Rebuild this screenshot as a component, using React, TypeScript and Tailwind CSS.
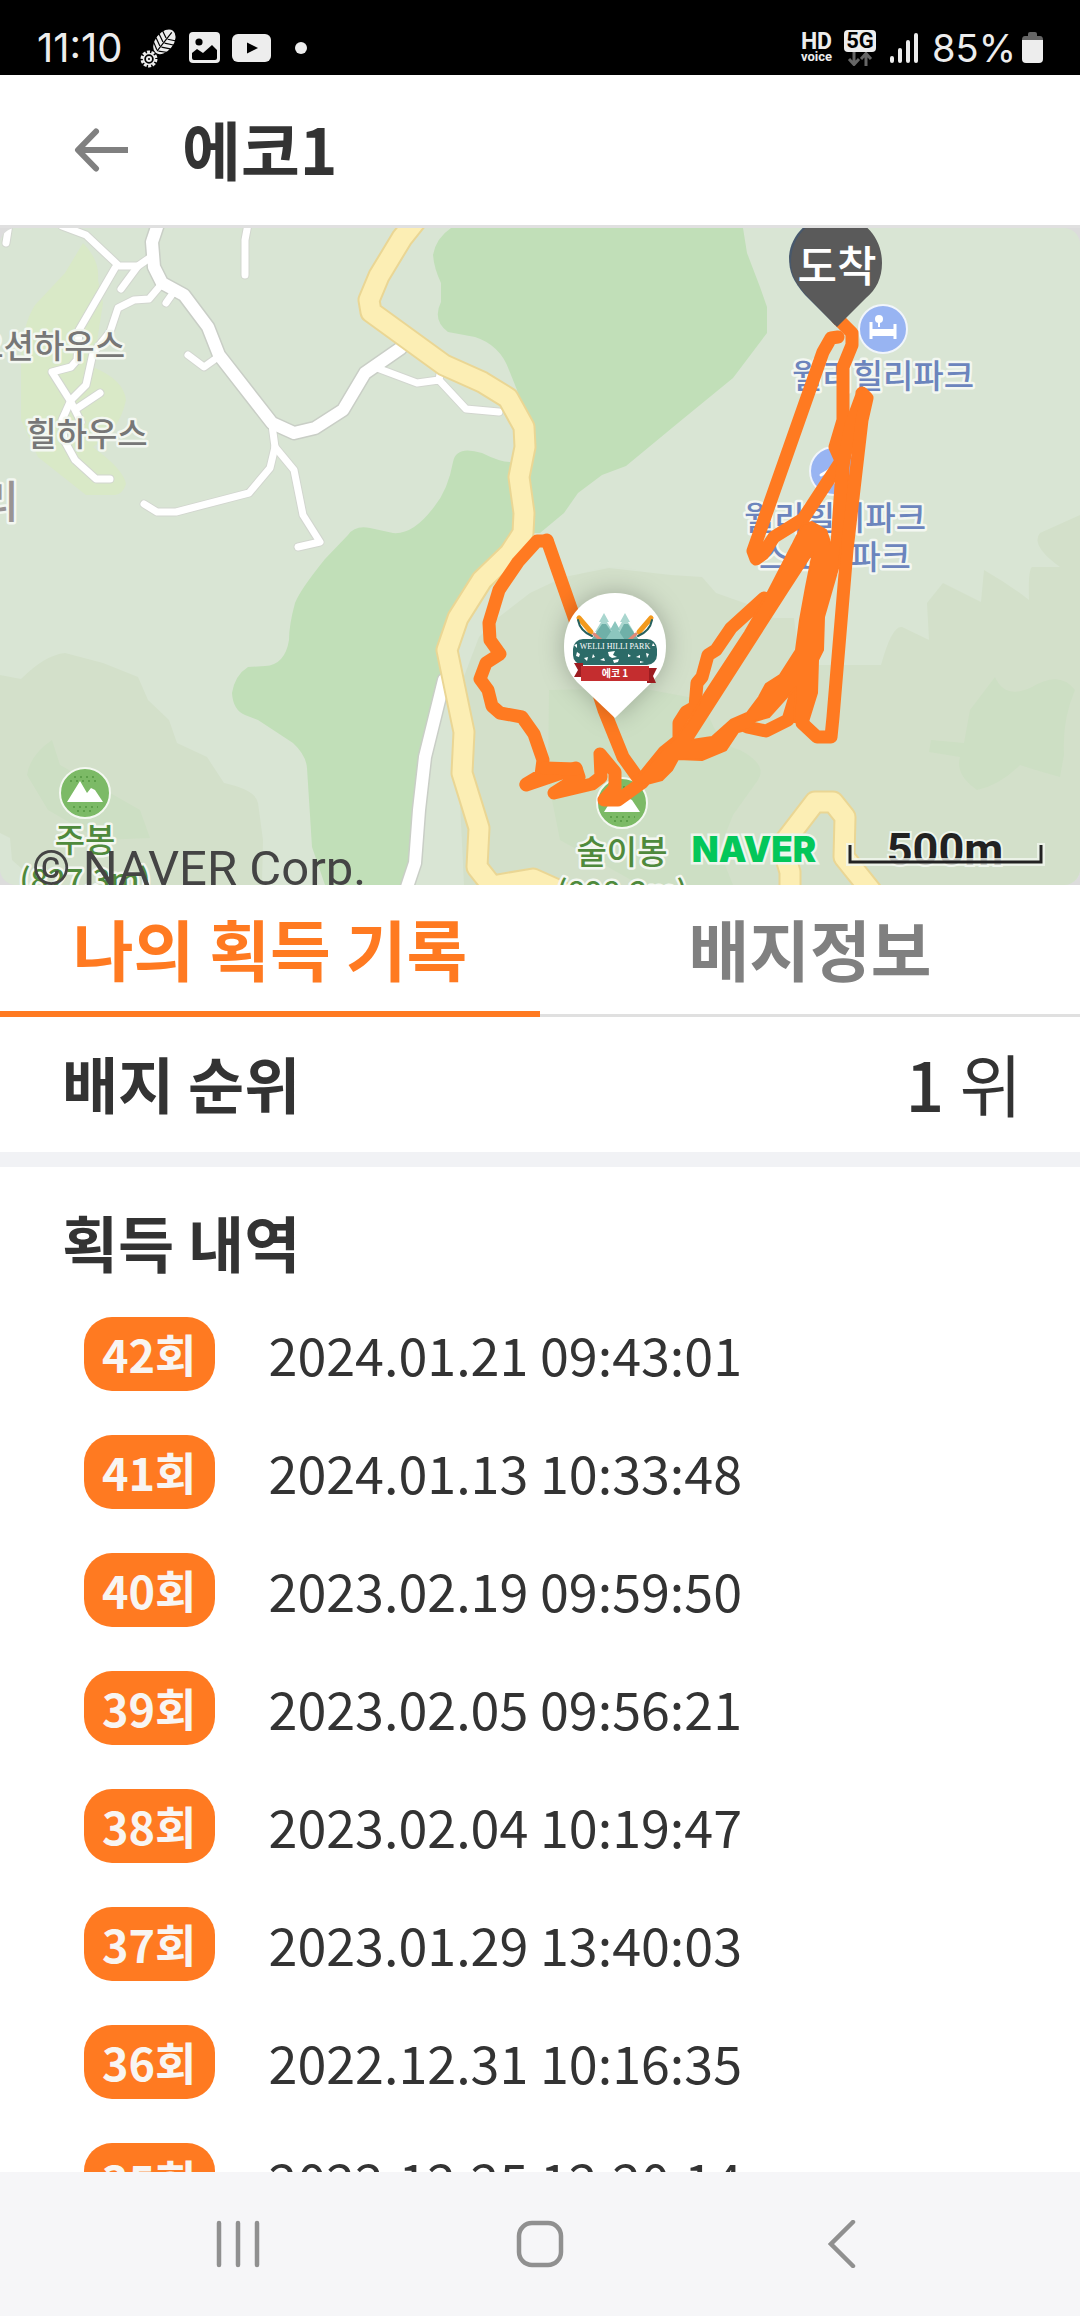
import type { ReactNode } from "react";

interface Registro {
  vuelta: number;
  fecha: string;
}

const REGISTROS: Registro[] = [
  { vuelta: 42, fecha: "2024.01.21 09:43:01" },
  { vuelta: 41, fecha: "2024.01.13 10:33:48" },
  { vuelta: 40, fecha: "2023.02.19 09:59:50" },
  { vuelta: 39, fecha: "2023.02.05 09:56:21" },
  { vuelta: 38, fecha: "2023.02.04 10:19:47" },
  { vuelta: 37, fecha: "2023.01.29 13:40:03" },
  { vuelta: 36, fecha: "2022.12.31 10:16:35" },
  { vuelta: 35, fecha: "2022.12.25 12:20:14" },
];

const CAMINOS = [
  "M9 224 L6 243",
  "M62 226 L86 235 L119 266 L138 266 L151 257",
  "M138 266 L121 289",
  "M115 268 L79 330 L77 360 L71 367 L52 372 L71 402 L81 422",
  "M160 286 L149 299 L134 300 L118 308 L110 332 L93 353 L86 385 L71 400 L62 420 L64 440 L75 460 L96 479 L110 479",
  "M100 393 L76 409",
  "M173 293 L166 303",
  "M248 224 L245 240 L245 275",
  "M188 355 L204 367 L218 357",
  "M272 425 L275 447 L270 468 L249 493 L176 512 L157 512 L144 504",
  "M275 447 L294 470 L303 515 L320 542 L298 547",
  "M377 368 L417 383 L439 380 L466 409 L499 412",
  "M439 380 L441 368",
];

const CARRETERAS = [
  "M158 224 L152 242 L154 267 L162 283 L184 295 L208 327 L219 355 L272 423 L294 433 L315 428 L343 410 L365 373 L401 348",
  "M444 680 L425 757 L419 810 L415 863 L406 890",
];

const AMARILLAS = [
  "M418 218 L402 238 L379 276 L369 300 L371 312 L444 365 L482 382 L508 398 L524 427 L525 447 L519 477 L524 513 L523 533 L510 553 L482 580 L458 618 L447 650 L464 732 L462 773 L479 828 L477 867 L492 886 L533 879 L562 892",
  "M790 890 L790 872 L782 845 L815 802 L833 802 L845 817 L844 857 L872 892",
];

const RUTAS = [
  "M547 540 L574 617 L604 710 L623 757 L638 778",
  "M547 541 L537 541 L518 562 L499 590 L489 623 L490 640 L500 654 L486 663 L480 679 L488 690 L492 706 L500 713 L522 717 L534 734 L543 760 L541 775 L526 784",
  "M526 785 L576 768 L579 777 L554 793 L592 784 L601 777 L600 754 L615 772 L615 788 L604 800 L618 800 L643 782",
  "M545 768 L576 769",
  "M838 337 L831 338 L823 352 L753 551 L756 559 L763 554 L774 537 L803 519 L843 458",
  "M837 318 L852 333 L852 345 L843 367 L843 420 L835 447 L843 465 L840 560",
  "M862 395 L851 425 L842 470 L836 560",
  "M802 723 L817 737 L831 737 L833 717 L847 550 L862 420 L867 398 L862 393",
  "M764 598 L731 628 L716 650 L708 655 L702 677 L697 683 L695 707 L686 712 L679 723 L679 740 L664 752 L643 778",
  "M747 727 L766 731 L788 720 L797 690",
];

function Monte({ x, y }: { x: number; y: number }) {
  return (
    <g transform={`translate(${x} ${y})`}>
      <circle r="25" fill="#7cba66" stroke="#f4f8f1" strokeWidth="2" />
      <path
        d="M-15 -12 H15 M-11 -16 H11 M-12 14 H13 M-8 18 H9"
        stroke="#5da04a"
        strokeWidth="2"
        strokeDasharray="2 4"
      />
      <path d="M-18 9 L-5 -12 L2 0 L6 -5 L10 -3 L18 9 Z" fill="#fff" />
    </g>
  );
}

function Mapa() {
  return (
    <svg
      viewBox="0 228 1080 657"
      preserveAspectRatio="xMidYMid slice"
      className="block h-[657px] w-full rounded-[16px] bg-[#d9e5d4]"
      role="img"
      aria-label="코스 지도"
      fontFamily="'Noto Sans CJK KR', sans-serif"
    >
      {/* relieve */}
      <path
        fill="#d3e0ca"
        d="M0 675 L21 679 Q45 655 65 653 L103 663 L138 677 L148 700 L169 720 L177 743 L207 757 L224 783 Q256 790 258 803 L263 840 L262 885 L40 885 L12 860 L10 838 L0 833 Z"
      />
      <path
        fill="#d3e0ca"
        d="M464 885 L455 700 L479 637 L499 617 L530 593 L564 577 L609 568 L671 575 L702 577 L716 593 L750 605 L774 618 L794 618 L800 665 L881 665 Q892 625 902 627 L929 640 L927 603 L943 583 L981 602 L984 570 Q1010 585 1029 600 Q1028 570 1032 567 L1060 567 Q1030 545 1040 533 L1080 515 L1080 885 Z"
      />
      <path
        fill="#cddfc4"
        d="M549 690 L640 688 L704 700 Q715 745 740 750 Q768 765 758 780 L733 815 L719 850 L733 885 L640 885 L560 840 L548 780 Z M995 677 Q1005 700 1032 687 Q1060 670 1075 690 Q1062 720 1064 755 L1060 777 Q1035 770 1020 765 Q1000 785 977 790 Q955 775 960 757 L929 752 L931 740 L964 743 L970 710 Z M52 740 Q30 755 27 775 L48 810 L100 840 L150 838 L140 810 L105 790 L60 765 Z"
      />
      <path
        fill="#d9e9c7"
        d="M83 243 Q100 260 98 280 L103 303 L93 367 Q124 380 126 400 Q120 430 93 447 Q124 470 126 484 Q122 495 115 495 L86 495 L38 457 L21 420 L21 363 Q22 325 35 305 L65 273 Z"
      />

      {/* bosques */}
      <g fill="#c1dfb8">
        <path d="M510 462 Q500 462 482 453 Q456 445 453 462 Q448 490 434 507 Q413 535 393 533 L370 528 Q355 525 348 535 L325 559 Q300 590 295 603 Q289 625 289 640 Q285 665 265 666 L248 667 Q235 675 232 693 Q233 710 245 715 L258 720 L293 743 Q306 755 307 768 L312 847 L325 885 L408 885 L425 757 L447 660 L525 520 Z" />
        <path d="M451 228 Q436 238 433 255 Q434 268 441 283 L441 302 Q432 320 448 332 L475 337 Q500 345 509 370 L517 390 L525 427 L520 533 L540 533 L564 513 L578 493 L602 475 L626 466 L678 423 L733 378 L767 333 L767 307 L760 287 L747 253 L743 228 Z" />
      </g>

      {/* carreteras */}
      <g fill="none" strokeLinecap="round" strokeLinejoin="round">
        {CAMINOS.map((d) => (
          <path key={d} d={d} stroke="#d2d6cf" strokeWidth="9" />
        ))}
        {CARRETERAS.map((d) => (
          <path key={d} d={d} stroke="#c9cec6" strokeWidth="15" />
        ))}
        {CAMINOS.map((d) => (
          <path key={d} d={d} stroke="#fff" strokeWidth="7" />
        ))}
        {CARRETERAS.map((d) => (
          <path key={d} d={d} stroke="#fff" strokeWidth="12" />
        ))}
        {AMARILLAS.map((d) => (
          <path key={d} d={d} stroke="#ead694" strokeWidth="23" />
        ))}
        {AMARILLAS.map((d) => (
          <path key={d} d={d} stroke="#fceeb4" strokeWidth="19" />
        ))}
      </g>

      {/* etiquetas */}
      <g
        fontSize="33"
        fontWeight="500"
        stroke="#f3f7f1"
        strokeWidth="5"
        strokeLinejoin="round"
        paintOrder="stroke"
      >
        <text x="125" y="358" textAnchor="end" fill="#777">
          오션하우스
        </text>
        <text x="87" y="446" textAnchor="middle" fill="#777">
          힐하우스
        </text>
        <text x="19" y="518" fontSize="44" textAnchor="end" fill="#9a9494">
          리
        </text>
        <g fill="#6c85bd" textAnchor="middle">
          <text x="883" y="388">월리힐리파크</text>
          <text x="835" y="530">월리힐리파크</text>
          <text x="835" y="569">스노우파크</text>
        </g>
        <g fill="#4f8a3c" textAnchor="middle">
          <text x="85" y="852">주봉</text>
          <text x="85" y="891" fontSize="31">(827.3m)</text>
          <text x="622" y="864">술이봉</text>
          <text x="622" y="903" fontSize="31">(898.2m)</text>
        </g>
      </g>
      <Monte x={85} y={793} />
      <Monte x={622} y={803} />

      <circle cx="883" cy="329" r="24" fill="#98b4f2" stroke="#f1f5fb" strokeWidth="2" />
      <path
        d="M871 322 V339 M871 334 H895 M895 324 V339"
        stroke="#fff"
        strokeWidth="3"
        fill="none"
      />
      <rect x="871" y="329" width="24" height="7" fill="#fff" />
      <circle cx="879" cy="319" r="4" fill="#fff" />
      <path d="M879 320 V327" stroke="#fff" strokeWidth="2" />
      <circle cx="834" cy="471" r="24" fill="#98b4f2" stroke="#f1f5fb" strokeWidth="2" />
      <path
        d="M821 475 L828 471 L836 464 M826 483 L848 480"
        stroke="#fff"
        strokeWidth="3"
        fill="none"
        strokeLinecap="round"
      />

      {/* recorrido */}
      <g stroke="#ff7a21" strokeLinecap="round" strokeLinejoin="round">
        <g fill="none" strokeWidth="13">
          {RUTAS.map((d) => (
            <path key={d} d={d} />
          ))}
        </g>
        <path
          fill="#ff7a21"
          strokeWidth="2"
          d="M803 524 L812 522 L826 530 L831 545 L841 545 L839 565 L824 617 L823 650 L818 660 L817 693 L808 722 L794 722 L796 687 L769 717 L752 722 L757 727 L738 732 L726 750 L702 760 L678 759 L672 770 L662 780 L643 785 L632 778 L641 774 L660 752 L675 738 L688 722 L705 693 L745 632 L767 594 Z M813 552 L787 592 L692 740 L712 737 L731 720 L747 713 L759 697 L766 684 L780 675 L796 650 L800 620 L806 587 Z"
          fillRule="evenodd"
        />
      </g>

      {/* marcador de llegada */}
      <path
        fill="#47586c"
        d="M835 325 L805 295 C793 281 789 272 789 257 C790 236 808 216 833 216 C860 216 878 236 879 260 Z"
      />
      <path
        fill="#5a5a5a"
        d="M837 327 L808 297 C796 284 791 274 791 262 C791 235 812 216 837 216 C862 216 882 236 882 263 C882 278 876 290 866 298 Z"
      />
      <text x="837" y="282" fontSize="43" fontWeight="500" fill="#fff" textAnchor="middle">
        도착
      </text>

      {/* insignia del parque */}
      <path
        d="M615 718 L577 682 C567 671 564 660 564 646 C564 616 586 593 615 593 C644 593 666 616 666 646 C666 660 662 671 652 682 Z"
        fill="#fff"
        className="drop-shadow-[0_0_12px_rgba(0,0,0,0.25)]"
      />
      <g fill="#a9d6cf">
        <path d="M604 613 L609 622 L607 622 L613 632 L611 632 L618 643 H591 L598 632 L595 632 L601 622 L599 622 Z" />
        <path d="M625 613 L630 622 L628 622 L634 632 L632 632 L639 643 H612 L619 632 L616 632 L622 622 L620 622 Z" />
      </g>
      <path fill="#6fb0a8" d="M602 624 L606 624 L613 634 L618 643 H589 Z M624 624 L628 624 L641 643 H614 Z" />
      <path fill="#8cc6be" d="M615 621 L620 630 L618 630 L627 643 H603 L612 630 L610 630 Z" />
      <g fill="none" strokeLinecap="round">
        <path d="M579 618 L591 632" stroke="#f39a1e" strokeWidth="5" />
        <path d="M651 618 L639 632" stroke="#f39a1e" strokeWidth="5" />
        <path d="M594 634 L602 641 M636 634 L628 641" stroke="#e08a78" strokeWidth="3" />
        <path
          d="M578 620 Q580 631 592 636 M652 620 Q650 631 638 636"
          stroke="#27615e"
          strokeWidth="2"
        />
      </g>
      <rect x="573" y="639" width="84" height="26" rx="10" fill="#2c6b68" />
      <g fill="#fff">
        <path d="M577 652 l3 2 -1 3 -3 -1 Z M584 658 l4 -1 -1 4 Z M593 654 l2 3 -3 1 Z M600 660 l4 -2 1 3 Z M608 652 l7 -1 -2 4 4 2 -5 1 -3 -2 Z M613 660 l6 -1 -1 3 -4 1 Z M628 654 l3 2 -3 1 Z M636 657 l4 -2 0 3 Z M646 653 l3 1 -2 4 Z M640 661 l4 1 -4 1 Z M574 645 l3 -1 0 4 Z M653 643 l2 3 -3 0 Z" />
      </g>
      <text x="615" y="649" fontSize="8" textAnchor="middle" fill="#fff" fontFamily="'Liberation Serif', serif">
        WELLI HILLI PARK
      </text>
      <path fill="#9c1c20" d="M574 663 H583 V677 H574 L578 670 Z M647 668 H657 L653 676 L656 683 H647 Z" />
      <rect x="581" y="666" width="68" height="15" fill="#c42d2f" />
      <text x="615" y="677" fontSize="10" fontWeight="700" textAnchor="middle" fill="#fff">
        에코 1
      </text>

      {/* créditos y escala */}
      <text x="32" y="885" fontSize="49" fill="#444" fontFamily="Roboto, sans-serif">
        © NAVER Corp.
      </text>
      <text
        x="754"
        y="862"
        fontSize="35"
        fontWeight="900"
        textAnchor="middle"
        fill="#03c75a"
        stroke="#eef5ec"
        strokeWidth="5"
        paintOrder="stroke"
        fontFamily="Inter, sans-serif"
      >
        NAVER
      </text>
      <text
        x="945"
        y="865"
        fontSize="45"
        fontWeight="700"
        textAnchor="middle"
        fill="#222"
        stroke="#eef5ec"
        strokeWidth="4"
        paintOrder="stroke"
        fontFamily="Roboto, sans-serif"
      >
        500m
      </text>
      <g fill="none">
        <path d="M850 843 V862 H1041 V843" stroke="#f1f6ee" strokeOpacity="0.8" strokeWidth="8" />
        <path d="M850 845 V862 H1041 V845" stroke="#222" strokeWidth="3" />
      </g>
    </svg>
  );
}

function BarraEstado() {
  return (
    <div className="flex h-[75px] shrink-0 items-center justify-between bg-black px-[37px] pt-5 font-['Inter',sans-serif] text-[40px] leading-none text-[#ededed]">
      <div className="flex items-center">
        <span>11:10</span>
        <svg width="40" height="40" viewBox="0 0 40 40" className="ml-4" fill="none">
          <g transform="rotate(38 26 13)">
            <ellipse cx="26" cy="14" rx="9" ry="14" fill="#ededed" />
            <path
              d="M17 6 L25 10 M17 11 L25 15 M17 16 L25 20 M18 21 L25 25 M35 6 L27 10 M35 11 L27 15 M35 16 L27 20 M34 21 L27 25 M26 2 V26"
              stroke="#000"
              strokeWidth="1.2"
            />
          </g>
          <circle cx="10" cy="31" r="7" stroke="#ededed" strokeWidth="3" strokeDasharray="3 1.4" />
          <circle cx="10" cy="31" r="5.5" stroke="#ededed" strokeWidth="1.5" />
          <circle cx="10" cy="31" r="2" stroke="#ededed" strokeWidth="2" />
        </svg>
        <svg width="31" height="31" viewBox="0 0 31 31" className="ml-2.5">
          <rect width="31" height="31" rx="4" fill="#ededed" />
          <circle cx="10" cy="10" r="3.6" fill="#000" />
          <path d="M3 21 L8 17 L14 21 L23 13 L28 18 V26 Q28 28 26 28 H5 Q3 28 3 26 Z" fill="#000" />
        </svg>
        <svg width="39" height="28" viewBox="0 0 39 28" className="ml-3">
          <rect width="39" height="28" rx="6" fill="#ededed" />
          <path d="M15 8.500 L26 14 L15 19.500 Z" fill="#000" />
        </svg>
        <span className="ml-6 size-3 rounded-full bg-[#ededed]" />
      </div>
      <div className="flex items-center">
        <div className="flex flex-col items-center font-['Roboto',sans-serif] leading-none font-bold">
          <span className="text-[23px] leading-[18px]">HD</span>
          <span className="text-[13px] leading-3">voice</span>
        </div>
        <div className="ml-3 flex flex-col items-center">
          <span className="flex h-[22px] w-8 items-center justify-center rounded-sm bg-[#ededed] font-['Roboto',sans-serif] text-[22px] font-bold text-black">
            5G
          </span>
          <svg width="26" height="14" viewBox="0 0 26 14" fill="none" stroke="#666" strokeWidth="3">
            <path d="M7 0 V12 M2 7 L7 12.500 L12 7 M19 14 V2 M14 7 L19 1.500 L24 7" />
          </svg>
        </div>
        <svg width="28" height="30" viewBox="0 0 28 30" className="ml-3.5" stroke="#ededed" strokeWidth="4" strokeLinecap="round">
          <path d="M2 25 V28 M10 17 V28 M18 9 V28 M26 2 V28" />
        </svg>
        <span className="ml-3.5 text-[38px]">85%</span>
        <svg width="21" height="31" viewBox="0 0 21 31" className="ml-1.5">
          <path d="M6 2 Q6 0 8 0 H13 Q15 0 15 2 V4 H18 Q21 4 21 8 H0 Q0 4 3 4 H6 Z" fill="#666" />
          <path d="M0 8 H21 V27 Q21 31 17 31 H4 Q0 31 0 27 Z" fill="#ededed" />
        </svg>
      </div>
    </div>
  );
}

function Pestana({ activa, children }: { activa?: boolean; children: ReactNode }) {
  return (
    <button
      type="button"
      role="tab"
      aria-selected={!!activa}
      className={
        activa
          ? "h-[132px] flex-1 border-b-[6px] border-[#ff7a21] pb-[2px] text-[#ff7a21]"
          : "h-[132px] flex-1 border-b-[3px] border-[#e0e0e0] pb-[5px] text-[#808080]"
      }
    >
      {children}
    </button>
  );
}

function FilaRegistro({ vuelta, fecha }: Registro) {
  return (
    <li className="flex items-center gap-[54px]">
      <span className="flex h-[74px] items-center rounded-[28px] bg-[#ff7a21] px-[18px] text-[45px] font-bold text-[#f8f5f2]">
        {vuelta}회
      </span>
      <time className="text-[52px]">{fecha}</time>
    </li>
  );
}

function BarraNavegacion() {
  return (
    <nav className="flex h-36 shrink-0 items-center bg-[#f6f6f8] px-[8%]">
      <button type="button" aria-label="최근 앱" className="flex flex-1 justify-center">
        <svg width="48" height="48" viewBox="0 0 48 48" stroke="#909090" strokeWidth="4.500" strokeLinecap="round">
          <path d="M5 3 V45 M24 3 V45 M43 3 V45" />
        </svg>
      </button>
      <button type="button" aria-label="홈" className="flex flex-1 justify-center">
        <svg width="48" height="48" viewBox="0 0 48 48" fill="none" stroke="#909090" strokeWidth="4.500">
          <rect x="3" y="3" width="42" height="42" rx="13" />
        </svg>
      </button>
      <button type="button" aria-label="뒤로" className="flex flex-1 justify-center">
        <svg width="28" height="48" viewBox="0 0 28 48" fill="none" stroke="#909090" strokeWidth="4.500" strokeLinecap="round">
          <path d="M25 2 L3 24 L25 46" />
        </svg>
      </button>
    </nav>
  );
}

export default function App() {
  return (
    <div className="flex h-screen flex-col overflow-hidden bg-white font-['Noto_Sans_CJK_KR',sans-serif] text-[#333]">
      <BarraEstado />
      <header className="flex h-[153px] shrink-0 items-center border-b-[3px] border-[#e0e0e0] pl-[72px]">
        <button type="button" aria-label="뒤로 가기">
          <svg width="56" height="44" viewBox="0 0 56 44" fill="none" stroke="#808080" strokeWidth="6">
            <path d="M24 3.500 L6 22 L24 40.500" strokeLinecap="round" strokeLinejoin="round" />
            <path d="M6 22 H56" />
          </svg>
        </button>
        <h1 className="ml-[54px] pb-1.5 text-[64px] leading-none font-bold">에코1</h1>
      </header>

      <main className="min-h-0 flex-1 overflow-hidden">
        <section className="bg-[#dcdcdc]">
          <Mapa />
        </section>

        <div role="tablist" className="flex text-[66px] leading-none font-bold">
          <Pestana activa>나의 획득 기록</Pestana>
          <Pestana>배지정보</Pestana>
        </div>

        <section className="flex h-[150px] items-center justify-between border-b-[15px] border-[#f1f2f5] pr-[58px] pb-1 pl-[62px] leading-none">
          <h2 className="text-[61px] font-bold">배지 순위</h2>
          <p className="text-[68px]">
            <strong className="font-medium">1</strong> 위
          </p>
        </section>

        <section className="px-[62px] pt-[41px]">
          <h2 className="text-[61px] leading-[68px] font-bold">획득 내역</h2>
          <ul className="mt-[41px] flex flex-col gap-11 pl-[22px] leading-[74px]">
            {REGISTROS.map((r) => (
              <FilaRegistro key={r.vuelta} {...r} />
            ))}
          </ul>
        </section>
      </main>

      <BarraNavegacion />
    </div>
  );
}
